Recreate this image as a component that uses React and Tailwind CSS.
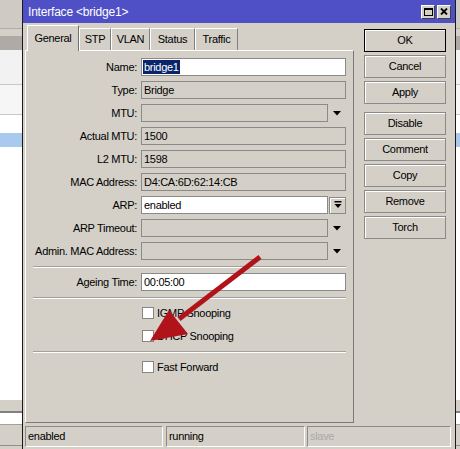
import React from 'react';

const FONT = "font-['Liberation_Sans','Arial',sans-serif]";

function DropArrow() {
  return (
    <div className="w-[18px] h-[18px] flex items-center justify-center">
      <svg width="8" height="5" viewBox="0 0 8 5">
        <path d="M0 0H8L4 4.5Z" fill="#000" />
      </svg>
    </div>
  );
}

function Field({ label, value, white, arrow, button, selected }) {
  const narrow = arrow || button;
  return (
    <div className="flex items-center h-[18px]">
      <div className="w-[111px] text-right whitespace-nowrap">{label}</div>
      <div
        className={`ml-[4px] h-[18px] border border-[#8a8a8a] flex items-center pl-[1px] whitespace-nowrap overflow-hidden ${
          white ? 'bg-white' : 'bg-[#d4d0c8]'
        } ${narrow ? 'w-[187px]' : 'w-[205px]'}`}
      >
        {selected ? (
          <span className="bg-[#0a246a] text-white h-[14px] leading-[14px] px-[1px]">{value}</span>
        ) : (
          <span className="px-[1px]">{value}</span>
        )}
      </div>
      {arrow && <DropArrow />}
      {button && (
        <div className="ml-[1px] w-[17px] h-[17px] border border-[#8a8a8a] shadow-[inset_1px_1px_0_#fff] flex items-center justify-center">
          <svg width="8" height="8" viewBox="0 0 8 8">
            <rect x="0.5" y="0" width="7" height="1.5" fill="#000" />
            <path d="M0.5 3H7.5L4 7Z" fill="#000" />
          </svg>
        </div>
      )}
    </div>
  );
}

function Sep({ className }) {
  return (
    <div className={`mx-[7px] ${className}`}>
      <div className="h-px bg-[#a0a0a0]" />
      <div className="h-px bg-white" />
    </div>
  );
}

function Check({ label, className }) {
  return (
    <div className={`flex items-center h-[18px] pl-[116px] ${className}`}>
      <div className="w-[12px] h-[12px] bg-white border border-[#858585]" />
      <span className="ml-[3px]">{label}</span>
    </div>
  );
}

function Btn({ children, def, className = '' }) {
  return (
    <div
      className={`h-[23px] flex items-center justify-center border shadow-[inset_1px_1px_0_#fff] ${
        def ? 'border-black' : 'border-[#8a8a8a]'
      } ${className}`}
    >
      {children}
    </div>
  );
}

function StatusField({ children, className = '', dim }) {
  return (
    <div
      className={`h-[21px] border-t border-l border-[#8c8c8c] border-r border-b border-r-white border-b-white flex items-center pl-[2px] ${
        dim ? 'text-[#a8a8a8]' : ''
      } ${className}`}
    >
      {children}
    </div>
  );
}

function SideStrip({ width }) {
  return (
    <div className={`${width} h-full flex flex-col shrink-0`}>
      <div className="h-[28px] bg-[#cfcbc4]" />
      <div className="h-[8px] bg-[#d4d0c8] border-t border-[#b0aca6]" />
      <div className="h-[14px] bg-[#aeaba6]" />
      <div className="h-[35px] bg-[#f2f2f2] border-b border-[#c8c8c8]" />
      <div className="h-[30px] bg-[#f6f6f6] border-b border-[#c8c8c8]" />
      <div className="h-[18px] bg-white" />
      <div className="h-[14px] bg-[#a9c9ef]" />
      <div className="h-[253px] bg-white" />
      <div className="h-[11px] bg-[#d4d0c8]" />
      <div className="h-[2px] bg-[#808080]" />
      <div className="h-[11px] bg-white" />
      <div className="h-px bg-[#a0a0a0]" />
      <div className="h-[21px] bg-[#d4d0c8] border-b border-[#909090]" />
      <div className="flex-1 bg-[#d4d0c8]" />
    </div>
  );
}

export default function App() {
  const tabs = [
    { name: 'STP', w: 'w-[32px]' },
    { name: 'VLAN', w: 'w-[39px]' },
    { name: 'Status', w: 'w-[45px]' },
    { name: 'Traffic', w: 'w-[43px]' },
  ];

  return (
    <div className={`relative w-[460px] h-[449px] overflow-hidden flex text-[11px] tracking-[-0.3px] text-black bg-[#d4d0c8] ${FONT}`}>
      <SideStrip width="w-[22px]" />

      {/* Window */}
      <div className="w-[434px] h-[460px] shrink-0 border-l border-r border-[#1a1a1a] bg-[#d4d0c8] flex flex-col">
        {/* Title bar */}
        <div className="h-[23px] bg-[#4f4fc6] flex items-center pl-[5px] pr-[4px]">
          <span className="text-white text-[12px] tracking-[-0.2px]">Interface &lt;bridge1&gt;</span>
          <div className="ml-auto flex gap-[2px]">
            <div className="w-[14px] h-[14px] bg-[#d4d0c8] border border-t-white border-l-white border-r-[#404040] border-b-[#404040] flex items-center justify-center">
              <svg width="9" height="8" viewBox="0 0 9 8">
                <rect x="0.5" y="0.5" width="8" height="7" fill="none" stroke="#000" />
                <rect x="0" y="0" width="9" height="2" fill="#000" />
              </svg>
            </div>
            <div className="w-[14px] h-[14px] bg-[#d4d0c8] border border-t-white border-l-white border-r-[#404040] border-b-[#404040] flex items-center justify-center">
              <svg width="8" height="7" viewBox="0 0 8 7">
                <path d="M1 0.5L7 6.5M7 0.5L1 6.5" stroke="#000" strokeWidth="1.8" />
              </svg>
            </div>
          </div>
        </div>

        {/* Body */}
        <div className="flex pl-[2px] mt-[2px]">
          <div className="w-[329px] flex flex-col">
            {/* Tabs */}
            <div className="h-[25px] flex items-end pl-[2px]">
              <div className="relative z-10 w-[52px] h-[26px] -mb-px bg-[#d4d0c8] border-t border-l border-white border-r border-r-[#707070] flex items-center justify-center pb-[1px]">
                General
              </div>
              {tabs.map((t) => (
                <div
                  key={t.name}
                  className={`${t.w} h-[22px] border-t border-l border-white border-r border-r-[#808080] flex items-center justify-center`}
                >
                  {t.name}
                </div>
              ))}
            </div>

            {/* Panel */}
            <div className="h-[373px] border-t border-l border-white border-r border-b border-r-[#7a7a7a] border-b-[#7a7a7a] flex flex-col pt-[7px]">
              <div className="flex flex-col gap-[5px]">
                <Field label="Name:" value="bridge1" white selected />
                <Field label="Type:" value="Bridge" />
                <Field label="MTU:" value="" arrow />
                <Field label="Actual MTU:" value="1500" />
                <Field label="L2 MTU:" value="1598" />
                <Field label="MAC Address:" value="D4:CA:6D:62:14:CB" />
                <Field label="ARP:" value="enabled" white button />
                <Field label="ARP Timeout:" value="" arrow />
                <Field label="Admin. MAC Address:" value="" arrow />
              </div>
              <Sep className="mt-[6px]" />
              <div className="mt-[5px]">
                <Field label="Ageing Time:" value="00:05:00" white />
              </div>
              <Sep className="mt-[6px]" />
              <Check label="IGMP Snooping" className="mt-[5px]" />
              <Check label="DHCP Snooping" className="mt-[5px]" />
              <Sep className="mt-[6px]" />
              <Check label="Fast Forward" className="mt-[5px]" />
            </div>
          </div>

          {/* Buttons */}
          <div className="ml-[10px] w-[82px] flex flex-col gap-[3px] pt-[4px]">
            <Btn def>OK</Btn>
            <Btn>Cancel</Btn>
            <Btn>Apply</Btn>
            <Btn className="mt-[5px]">Disable</Btn>
            <Btn>Comment</Btn>
            <Btn>Copy</Btn>
            <Btn>Remove</Btn>
            <Btn>Torch</Btn>
          </div>
        </div>

        {/* Status bar */}
        <div className="flex pl-[2px] mt-[3px]">
          <StatusField className="w-[138px]">enabled</StatusField>
          <StatusField className="w-[139px] ml-[3px]">running</StatusField>
          <StatusField className="w-[144px] ml-[2px]" dim>slave</StatusField>
        </div>
      </div>

      <SideStrip width="w-[4px]" />

      {/* Red annotation arrow */}
      <svg className="absolute inset-0 pointer-events-none" width="460" height="449" viewBox="0 0 460 449">
        <line x1="260" y1="257" x2="179" y2="319" stroke="#b0141a" strokeWidth="5" />
        <path d="M150 341L169 310L188 334Z" fill="#b0141a" />
      </svg>
    </div>
  );
}
